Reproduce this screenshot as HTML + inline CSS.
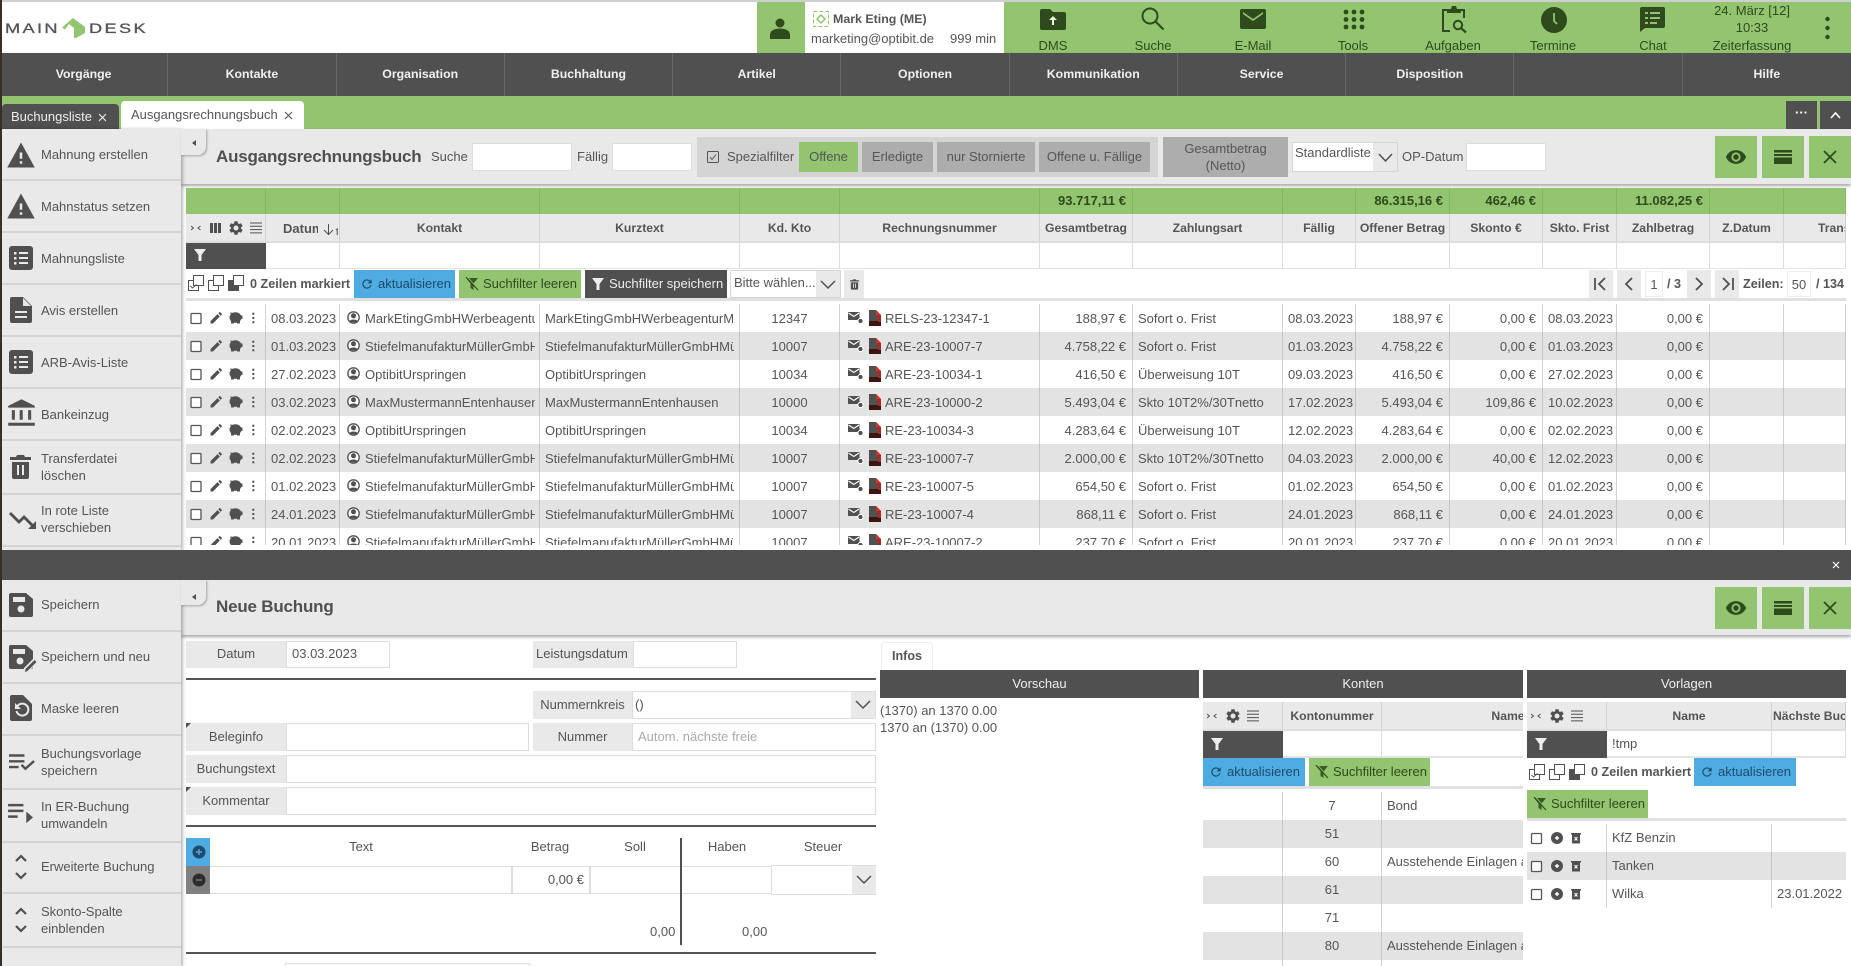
<!DOCTYPE html>
<html lang="de"><head><meta charset="utf-8"><title>Main Desk</title>
<style>
*{box-sizing:border-box}
html,body{margin:0;padding:0;width:1851px;height:966px;overflow:hidden;background:#fff}
body{font:13px/17px "Liberation Sans",sans-serif;color:#555;position:relative}
.a{position:absolute}
.t{position:absolute;white-space:nowrap;line-height:17px}
.c{text-align:center}
.b{font-weight:bold;font-size:12.600px}
.g{background:#93c46f}
.d{background:#505050}
.l{background:#e9e9e9}
.sep{position:absolute;left:2px;width:179px;height:2px;background:#d3d3d3}
.nav{position:absolute;top:53px;height:43px;width:168.27px;line-height:43px;text-align:center;color:#f0f0f0;font-weight:bold;font-size:12.300px;border-right:1px solid #666}
.top{position:absolute;top:37px;width:100px;text-align:center;color:#2f4a1d;line-height:17px}
.inp{position:absolute;background:#fff;border:1px solid #ddd;line-height:26px;padding-left:5px;overflow:hidden;white-space:nowrap}
.lab{position:absolute;background:#e9e9e9;text-align:center;line-height:28px;white-space:nowrap;overflow:hidden}
.btn{position:absolute;background:#adadad;text-align:center;line-height:30px;white-space:nowrap}
.btn.g{background:#93c46f}
.tb{position:absolute;height:28px;line-height:28px;white-space:nowrap;overflow:hidden;padding-left:24px}
.ic{position:absolute;overflow:visible}
.hr{position:absolute;left:186px;width:690px;height:2px;background:#555}
.clip{position:absolute;overflow:hidden}
.logo{position:absolute;top:18px;line-height:20px;font-size:14px;letter-spacing:1.800px;color:#555;-webkit-text-stroke:.3px #555;transform:scaleX(1.3);transform-origin:0 0;white-space:nowrap}
table{border-collapse:separate;border-spacing:0;table-layout:fixed;position:absolute;left:0;top:0}
td{height:28px;padding:0 5px;white-space:nowrap;overflow:hidden;border-right:1px solid #d2d2d2;line-height:28px}
.z td{background:#e3e3e3;border-right-color:#c4c4c4}
td.r{text-align:right;padding-right:6px}
td.m{text-align:center}
td.n{padding:0}
td svg{display:block}
td.uc{position:relative;padding-left:25px;padding-right:4px}
td.rn{position:relative;padding-left:45px;padding-right:0}
td.uc svg,td.rn svg{position:absolute;left:0;top:0}
.o{overflow:hidden}
.mt td{padding-top:2px;line-height:26px}
.mt td.n{padding-top:0}
.s td{height:26px;background:#93c46f;color:#2f4a1d;font-weight:bold;border-right:1px solid #86b562;line-height:26px}
.h td{height:29px;background:#e9e9e9;font-weight:bold;font-size:12.200px;text-align:center;border-right:1px solid #d2d2d2;border-bottom:2px solid #dedede;padding:2px 2px 0;line-height:25px}
.f td{height:27px;background:#fff;border-right:1px solid #ddd;border-bottom:2px solid #e3e3e3;line-height:25px}
.f td.k{background:#505050;border:0}
</style></head>
<body>
<svg width="0" height="0" style="position:absolute">
<defs>
<symbol id="warn" viewBox="0 0 24 24"><path d="M1 22h22L12 2 1 22zm12-3h-2v-2h2v2zm0-4h-2v-5h2v5z" fill="#505050" fill-rule="evenodd"/></symbol>
<symbol id="list" viewBox="0 0 24 24"><rect x="0" y="0" width="24" height="24" rx="3" fill="#505050"/><path d="M5 6h2.500v2.500H5zM5 11h2.500v2.500H5zM5 16h2.500v2.500H5zM10 6h9v2h-9zM10 11h9v2h-9zM10 16h9v2h-9z" fill="#e9e9e9"/></symbol>
<symbol id="doc" viewBox="0 0 22 26"><path d="M2 0h11l9 9v15a2 2 0 0 1-2 2H2a2 2 0 0 1-2-2V2a2 2 0 0 1 2-2z" fill="#505050"/><path d="M13 1v8h8zM5 14h12v2H5zM5 19h12v2H5z" fill="#e9e9e9"/></symbol>
<symbol id="bank" viewBox="0 0 24 24"><path d="M4 10v8h2.500v-8H4zm6.500 0v8H13v-8h-2.500zM1 23h22v-2.500H1V23zM17.500 10v8H20v-8h-2.500zM12 1L1 6.500V8h22V6.500L12 1z" fill="#505050"/></symbol>
<symbol id="trash" viewBox="0 0 21 24"><path d="M2 7h17v15a2 2 0 0 1-2 2H4a2 2 0 0 1-2-2zM0 2h6l1-2h7l1 2h6v3H0z" fill="#505050"/><path d="M7 10h2v10H7zM12 10h2v10h-2z" fill="#e9e9e9"/></symbol>
<symbol id="trend" viewBox="0 0 28 18"><path d="M20 18l3-3-7-7-5 5-10-10L3 1l8 8 5-5 9 9 3-3v8z" fill="#505050"/></symbol>
<symbol id="save" viewBox="0 0 24 24"><path d="M2 0h15l7 6v16a2 2 0 0 1-2 2H2a2 2 0 0 1-2-2V2a2 2 0 0 1 2-2z" fill="#505050"/><path d="M4 4h12v5H4z" fill="#e9e9e9"/><circle cx="12" cy="16" r="3.500" fill="#e9e9e9"/></symbol>
<symbol id="savep" viewBox="0 0 28 28"><path d="M2 0h15l7 6v16a2 2 0 0 1-2 2H2a2 2 0 0 1-2-2V2a2 2 0 0 1 2-2z" fill="#505050"/><path d="M4 4h12v5H4z" fill="#e9e9e9"/><circle cx="11" cy="16" r="3.500" fill="#e9e9e9"/><path d="M14 28l1-5 10-10 4 4-10 10z" fill="#e9e9e9"/><path d="M16 27l.5-3 9-9 2 2-9 9z" fill="#505050"/></symbol>
<symbol id="undo" viewBox="0 0 22 26"><path d="M2 0h11l9 9v15a2 2 0 0 1-2 2H2a2 2 0 0 1-2-2V2a2 2 0 0 1 2-2z" fill="#505050"/><path d="M7.500 11a6 6 0 1 1-1 5" fill="none" stroke="#e9e9e9" stroke-width="2"/><path d="M5 8v6h6z" fill="#e9e9e9"/></symbol>
<symbol id="lcheck" viewBox="0 0 28 18"><path d="M0 1h16v2.500H0zM0 7h16v2.500H0zM0 13h10v2.500H0z" fill="#505050"/><path d="M13 12l4 4 9-8" fill="none" stroke="#505050" stroke-width="2.500"/></symbol>
<symbol id="larrow" viewBox="0 0 28 24"><path d="M0 2h16v2.500H0zM0 8h16v2.500H0zM0 14h10v2.500H0zM19 10v12l7-6z" fill="#505050"/></symbol>
<symbol id="ud" viewBox="0 0 14 30"><path d="M2 9l5-5 5 5M2 21l5 5 5-5" fill="none" stroke="#505050" stroke-width="2.200"/></symbol>
<symbol id="search" viewBox="0 0 24 24"><circle cx="9" cy="9" r="7.500" fill="none" stroke="#2f4a1d" stroke-width="2"/><path d="M14 14l8.500 8.500" stroke="#2f4a1d" stroke-width="2.200" fill="none"/></symbol>
<symbol id="eye" viewBox="0 0 24 24"><path d="M12 4.500C7 4.500 2.730 7.610 1 12c1.730 4.390 6 7.500 11 7.500s9.270-3.110 11-7.500c-1.730-4.390-6-7.500-11-7.500zM12 17a5 5 0 1 1 0-10 5 5 0 0 1 0 10zm0-8a3 3 0 1 0 0 6 3 3 0 0 0 0-6z" fill="#2f4a1d"/></symbol>
<symbol id="bars" viewBox="0 0 18 14"><path d="M0 0h18v2.500H0zM0 4h18v2H0zM0 7.500h18V14H0z" fill="#2f4a1d"/></symbol>
<symbol id="xx" viewBox="0 0 14 14"><path d="M1 1l12 12M13 1L1 13" stroke="#2f4a1d" stroke-width="1.800" fill="none"/></symbol>
<symbol id="filter" viewBox="0 0 12 12"><path d="M0 0h12L7.500 6v6h-3V6z" fill="#eee"/></symbol>
<symbol id="filterx" viewBox="0 0 14 14"><path d="M1 1h12L8.500 6.500V13l-3-2V6.500z" fill="#3c5a25"/><path d="M2 0l11 12.500" stroke="#93c46f" stroke-width="1.600"/><path d="M1 0l12 13" stroke="#2f4a1d" stroke-width="1.100"/></symbol>
<symbol id="ref" viewBox="0 0 24 24"><path d="M17.650 6.350A7.958 7.958 0 0 0 12 4c-4.420 0-7.990 3.580-7.990 8s3.570 8 7.990 8c3.730 0 6.840-2.550 7.730-6h-2.080A5.990 5.990 0 0 1 12 18c-3.310 0-6-2.690-6-6s2.690-6 6-6c1.660 0 3.140.69 4.220 1.780L13 11h7V4l-2.350 2.350z" fill="#1f4a6b"/></symbol>
<symbol id="gear" viewBox="0 0 24 24"><path d="M19.140 12.940c.04-.3.06-.61.06-.94s-.02-.64-.07-.94l2.030-1.580a.49.49 0 0 0 .12-.61l-1.920-3.320a.49.49 0 0 0-.59-.22l-2.390.96a7 7 0 0 0-1.620-.94l-.36-2.540a.48.48 0 0 0-.48-.41h-3.840a.48.48 0 0 0-.47.41l-.36 2.540c-.59.24-1.130.57-1.620.94l-2.390-.96a.49.49 0 0 0-.59.22L2.740 8.870a.48.48 0 0 0 .12.61l2.030 1.580c-.05.3-.09.63-.09.94s.02.64.07.94l-2.030 1.580a.49.49 0 0 0-.12.61l1.920 3.320c.12.22.37.29.59.22l2.390-.96c.5.38 1.030.7 1.620.94l.36 2.540c.05.24.24.41.48.41h3.840c.24 0 .44-.17.47-.41l.36-2.540c.59-.24 1.130-.56 1.620-.94l2.390.96c.22.08.47 0 .59-.22l1.920-3.320c.12-.22.07-.47-.12-.61l-2.010-1.580zM12 15.600A3.600 3.600 0 1 1 12 8.400a3.600 3.600 0 0 1 0 7.200z" fill="#505050" transform="translate(-2.400 -2.400) scale(1.200)"/></symbol>
<symbol id="lin" viewBox="0 0 12 12"><path d="M0 .5h12v1H0zM0 3.800h12v1H0zM0 7.100h12v1H0zM0 10.400h12v1H0z" fill="#505050"/></symbol>
<symbol id="arr" viewBox="0 0 10 6"><path d="M0 1l2.500 2L0 5M9.500 1L7 3l2.500 2" fill="none" stroke="#505050" stroke-width="1"/></symbol>
<symbol id="mk" viewBox="0 0 56 16"><rect x=".5" y="5.500" width="10" height="10" fill="#fff" stroke="#505050"/><rect x="5.500" y=".5" width="10" height="10" fill="#fff" stroke="#505050"/><path d="M2.500 11l2 2 4-3.500" stroke="#505050" fill="none"/><rect x="20.500" y="5.500" width="10" height="10" fill="#fff" stroke="#505050"/><rect x="25.500" y=".5" width="10" height="10" fill="#fff" stroke="#505050"/><rect x="40" y="5" width="11" height="11" fill="#505050"/><rect x="45.500" y=".5" width="10" height="10" fill="#fff" stroke="#505050"/></symbol>
<g id="ri">
<rect x="5" y="9.500" width="10" height="10" rx="1" fill="#fff" stroke="#555" stroke-width="1.300"/>
<path d="M24.500 19.500v-2.400l7-7 2.400 2.400-7 7zM32.300 9.300l1-1a.7.7 0 0 1 1 0l1.400 1.400a.7.7 0 0 1 0 1l-1 1z" fill="#505050"/>
<ellipse cx="49.500" cy="13.500" rx="6" ry="5.300" fill="#505050"/><rect x="45" y="16" width="3" height="3.500" fill="#505050"/><rect x="51" y="16" width="3" height="3.500" fill="#505050"/><path d="M44 8.500l4 .5-2 3zM54 11.500h2.500v3.500H54z" fill="#505050"/>
<path d="M66.300 8.800h2v2h-2zM66.300 13h2v2h-2zM66.300 17.200h2v2h-2z" fill="#505050"/>
</g>
<g id="uc"><circle cx="13.500" cy="13.500" r="5.700" fill="#fff" stroke="#505050" stroke-width="1.300"/><circle cx="13.500" cy="11.800" r="2.500" fill="#505050"/><path d="M9.500 17c1-2 7-2 8 0-1.500 1.700-6.500 1.700-8 0z" fill="#505050"/></g>
<g id="rn"><path d="M8 8h11.500v8H8z" fill="#505050"/><path d="M8.500 9l5.300 3.500L19 9" stroke="#fff" fill="none" stroke-width="1.100"/><circle cx="20.500" cy="17" r="2.600" fill="#505050" stroke="#fff"/><path d="M29 6h7l5 5v6H29z" fill="#505050"/><path d="M36 6l5 5h-5z" fill="#d93025"/><path d="M29 17h12v5H29z" fill="#3a1512"/><path d="M38 11h3v7h-3z" fill="#b3261e"/></g>
<g id="vi"><rect x="4.500" y="9.500" width="10" height="10" rx="1" fill="#fff" stroke="#555" stroke-width="1.300"/><circle cx="30" cy="14" r="6" fill="#505050"/><path d="M28 14h4M30 12v4" stroke="#fff" stroke-width="1.400"/><path d="M45 10.500h8v9h-8zM44 9h10v1.500H44z" fill="#505050"/><path d="M47.500 13l3 3.500M50.500 13l-3 3.500" stroke="#fff" stroke-width="1"/></g>
</defs>
</svg>

<div class="a" style="left:0;top:0;width:2px;height:966px;background:#3a2d2a;z-index:9"></div>
<div class="a" style="left:0;top:0;width:1851px;height:2px;background:#cfcfcf"></div>

<!-- HEADER -->
<div class="logo" style="left:5px">MAIN</div>
<svg class="ic" style="left:62px;top:18px" width="23" height="20" viewBox="0 0 23 20"><path d="M0 9.500L11 0l12 9v6l-9 5h-2V10L7 6 3 11.500z" fill="#93c46f"/></svg>
<div class="logo" style="left:89px">DESK</div>

<div class="a g" style="left:757px;top:2px;width:48px;height:51px"></div>
<svg class="ic" style="left:770px;top:18px" width="20" height="21" viewBox="0 0 20 21"><circle cx="10" cy="5" r="4.500" fill="#2f4a1d"/><path d="M0 21v-4c0-4 4-6.500 10-6.500S20 13 20 17v4z" fill="#2f4a1d"/></svg>
<svg class="ic" style="left:813px;top:11px" width="16" height="16" viewBox="0 0 16 16"><rect x=".5" y=".5" width="15" height="15" fill="none" stroke="#93c46f" stroke-dasharray="4 2"/><path d="M8 4l4 4-4 4-4-4z" fill="none" stroke="#93c46f" stroke-width="1.500"/></svg>
<div class="t b" style="left:833px;top:11px;font-size:12.400px">Mark Eting (ME)</div>
<div class="t" style="left:811px;top:30px">marketing@optibit.de</div>
<div class="t" style="left:950px;top:30px">999 min</div>

<div class="a g" style="left:1004px;top:2px;width:847px;height:51px"></div>
<svg class="ic" style="left:1040px;top:9px" width="26" height="21" viewBox="0 0 26 21"><path d="M2 0h8l3 3h11a2 2 0 0 1 2 2v14a2 2 0 0 1-2 2H2a2 2 0 0 1-2-2V2a2 2 0 0 1 2-2z" fill="#2f4a1d"/><path d="M12 16v-5H9l4-4 4 4h-3v5z" fill="#e9f2e0"/></svg>
<svg class="ic" style="left:1141px;top:7px" width="24" height="24"><use href="#search"/></svg>
<svg class="ic" style="left:1240px;top:9px" width="26" height="20" viewBox="0 0 26 20"><path d="M2 0h22a2 2 0 0 1 2 2v16a2 2 0 0 1-2 2H2a2 2 0 0 1-2-2V2a2 2 0 0 1 2-2zm1 3l10 7 10-7v2l-10 7L3 5z" fill="#2f4a1d" fill-rule="evenodd"/></svg>
<svg class="ic" style="left:1343px;top:9px" width="22" height="21" viewBox="0 0 22 21"><g fill="#2f4a1d"><circle cx="3" cy="3" r="2.400"/><circle cx="11" cy="3" r="2.400"/><circle cx="19" cy="3" r="2.400"/><circle cx="3" cy="10.500" r="2.400"/><circle cx="11" cy="10.500" r="2.400"/><circle cx="19" cy="10.500" r="2.400"/><circle cx="3" cy="18" r="2.400"/><circle cx="11" cy="18" r="2.400"/><circle cx="19" cy="18" r="2.400"/></g></svg>
<svg class="ic" style="left:1442px;top:5px" width="25" height="28" viewBox="0 0 25 28"><path d="M8 26H1V5h4M18 5h4v8" fill="none" stroke="#2f4a1d" stroke-width="2"/><path d="M5 4h4l1-3h4l1 3h4v4H5z" fill="#2f4a1d"/><circle cx="16" cy="20" r="4.200" fill="none" stroke="#2f4a1d" stroke-width="2"/><path d="M19 23l5 4.500" stroke="#2f4a1d" stroke-width="2.200"/></svg>
<svg class="ic" style="left:1541px;top:7px" width="26" height="26" viewBox="0 0 26 26"><circle cx="13" cy="13" r="13" fill="#2f4a1d"/><path d="M13 6v8l3 3" stroke="#93c46f" stroke-width="1.800" fill="none"/></svg>
<svg class="ic" style="left:1640px;top:7px" width="25" height="25" viewBox="0 0 25 25"><path d="M2 0h21a2 2 0 0 1 2 2v17a2 2 0 0 1-2 2H5l-5 4V2a2 2 0 0 1 2-2z" fill="#2f4a1d"/><path d="M5 5h3v2H5zM10 5h10v2H10zM5 10h3v2H5zM10 10h10v2H10zM5 15h3v2H5zM10 15h7v2H10z" fill="#93c46f"/></svg>
<div class="top" style="left:1003px">DMS</div>
<div class="top" style="left:1103px">Suche</div>
<div class="top" style="left:1203px">E-Mail</div>
<div class="top" style="left:1303px">Tools</div>
<div class="top" style="left:1403px">Aufgaben</div>
<div class="top" style="left:1503px">Termine</div>
<div class="top" style="left:1603px">Chat</div>
<div class="top" style="left:1702px;top:2px">24. März [12]</div>
<div class="top" style="left:1702px;top:19px">10:33</div>
<div class="top" style="left:1702px">Zeiterfassung</div>
<svg class="ic" style="left:1825px;top:16px" width="5" height="23"><g fill="#2f4a1d"><circle cx="2.500" cy="3" r="2.200"/><circle cx="2.500" cy="12" r="2.200"/><circle cx="2.500" cy="21" r="2.200"/></g></svg>

<!-- NAV -->
<div class="a d" style="left:0;top:53px;width:1851px;height:43px;box-shadow:0 1px 2px rgba(0,0,0,.3)"></div>
<div class="nav" style="left:0">Vorgänge</div>
<div class="nav" style="left:168.270px">Kontakte</div>
<div class="nav" style="left:336.550px">Organisation</div>
<div class="nav" style="left:504.820px">Buchhaltung</div>
<div class="nav" style="left:673.090px">Artikel</div>
<div class="nav" style="left:841.360px">Optionen</div>
<div class="nav" style="left:1009.640px">Kommunikation</div>
<div class="nav" style="left:1177.910px">Service</div>
<div class="nav" style="left:1346.180px">Disposition</div>
<div class="nav" style="left:1514.450px"></div>
<div class="nav" style="left:1682.730px;border:0">Hilfe</div>

<!-- TAB BAR -->
<div class="a g" style="left:0;top:96px;width:1851px;height:33px"></div>
<div class="a d" style="left:2px;top:104px;width:117px;height:25px;border-radius:4px 4px 0 0;color:#eee;line-height:26px;padding-left:9px;white-space:nowrap">Buchungsliste</div>
<svg class="ic" style="left:98px;top:113px" width="9" height="9"><path d="M1 1l7 7M8 1L1 8" stroke="#eee" stroke-width="1.100"/></svg>
<div class="a" style="left:121px;top:101px;width:183px;height:28px;background:#fff;border-radius:4px 4px 0 0;line-height:28px;padding-left:10px;white-space:nowrap">Ausgangsrechnungsbuch</div>
<svg class="ic" style="left:284px;top:111px" width="9" height="9"><path d="M1 1l7 7M8 1L1 8" stroke="#555" stroke-width="1.100"/></svg>
<div class="a d c" style="left:1786px;top:101px;width:31px;height:28px;color:#fff;line-height:24px;font-weight:bold">···</div>
<div class="a d" style="left:1820px;top:101px;width:31px;height:28px"></div>
<svg class="ic" style="left:1830px;top:111px" width="11" height="8"><path d="M1 7l4.500-5L10 7" stroke="#fff" stroke-width="1.600" fill="none"/></svg>

<!-- TOOLBAR 1 -->
<div class="a l" style="left:181px;top:129px;width:1670px;height:55px;box-shadow:0 2px 3px rgba(0,0,0,.35)"></div>
<div class="t" style="left:216px;top:146px;font-size:17px;font-weight:bold;line-height:22px;color:#505050;letter-spacing:-.2px">Ausgangsrechnungsbuch</div>
<div class="t" style="left:431px;top:148px">Suche</div>
<div class="inp" style="left:472px;top:143px;width:100px;height:28px"></div>
<div class="t" style="left:577px;top:148px">Fällig</div>
<div class="inp" style="left:612px;top:143px;width:80px;height:28px"></div>
<div class="a" style="left:697px;top:137px;width:461px;height:40px;background:#d4d4d4"></div>
<svg class="ic" style="left:707px;top:151px" width="12" height="12"><rect x=".5" y=".5" width="11" height="11" rx="1" fill="none" stroke="#555"/><path d="M3 6l2 2.500 4-5" fill="none" stroke="#555"/></svg>
<div class="t" style="left:727px;top:148px">Spezialfilter</div>
<div class="btn g" style="left:799px;top:142px;width:59px;height:30px">Offene</div>
<div class="btn" style="left:862px;top:142px;width:71px;height:30px">Erledigte</div>
<div class="btn" style="left:937px;top:142px;width:98px;height:30px">nur Stornierte</div>
<div class="btn" style="left:1039px;top:142px;width:111px;height:30px">Offene u. Fällige</div>
<div class="a c" style="left:1163px;top:137px;width:125px;height:40px;background:#adadad;padding-top:3px">Gesamtbetrag<br>(Netto)</div>
<div class="a" style="left:1292px;top:142px;width:106px;height:30px;background:#fff;border:1px solid #d5d5d5;line-height:20px;padding-left:2px;white-space:nowrap">Standardliste</div>
<div class="a" style="left:1373px;top:143px;width:24px;height:28px;background:#e9e9e9"></div>
<svg class="ic" style="left:1378px;top:153px" width="15" height="10"><path d="M1 1l6.500 7L14 1" fill="none" stroke="#505050" stroke-width="1.500"/></svg>
<div class="t" style="left:1402px;top:148px">OP-Datum</div>
<div class="inp" style="left:1466px;top:143px;width:80px;height:28px"></div>

<div class="a g" style="left:1715px;top:136px;width:42px;height:42px"></div>
<div class="a g" style="left:1762px;top:136px;width:42px;height:42px"></div>
<div class="a g" style="left:1809px;top:136px;width:42px;height:42px"></div>
<svg class="ic" style="left:1725px;top:146px" width="22" height="22"><use href="#eye"/></svg>
<svg class="ic" style="left:1774px;top:150px" width="18" height="14"><use href="#bars"/></svg>
<svg class="ic" style="left:1823px;top:150px" width="14" height="14"><use href="#xx"/></svg>

<!-- LEFT PANEL 1 -->
<div class="a l" style="left:2px;top:129px;width:179px;height:421px;box-shadow:1px 1px 4px rgba(0,0,0,.4);z-index:2"></div>
<div class="a l" style="left:181px;top:129px;width:25px;height:26px;border-radius:0 0 8px 0;box-shadow:1px 1px 2px rgba(0,0,0,.3);z-index:2"></div>
<svg class="ic" style="left:192px;top:140px;z-index:3" width="4" height="6"><path d="M4 0v6L0 3z" fill="#505050"/></svg>
<div style="position:absolute;left:0;top:0;z-index:3">
<div class="sep" style="top:179px"></div><div class="sep" style="top:231px"></div><div class="sep" style="top:283px"></div><div class="sep" style="top:335px"></div><div class="sep" style="top:387px"></div><div class="sep" style="top:439px"></div><div class="sep" style="top:493px"></div><div class="sep" style="top:545px"></div>
<svg class="ic" style="left:6px;top:140px" width="30" height="30"><use href="#warn"/></svg>
<svg class="ic" style="left:6px;top:191px" width="30" height="30"><use href="#warn"/></svg>
<svg class="ic" style="left:9px;top:246px" width="24" height="24"><use href="#list"/></svg>
<svg class="ic" style="left:10px;top:297px" width="22" height="26"><use href="#doc"/></svg>
<svg class="ic" style="left:9px;top:350px" width="24" height="24"><use href="#list"/></svg>
<svg class="ic" style="left:7px;top:398px" width="29" height="29"><use href="#bank"/></svg>
<svg class="ic" style="left:10px;top:455px" width="21" height="24"><use href="#trash"/></svg>
<svg class="ic" style="left:8px;top:511px" width="28" height="18"><use href="#trend"/></svg>
<div class="t" style="left:41px;top:146px">Mahnung erstellen</div>
<div class="t" style="left:41px;top:198px">Mahnstatus setzen</div>
<div class="t" style="left:41px;top:250px">Mahnungsliste</div>
<div class="t" style="left:41px;top:302px">Avis erstellen</div>
<div class="t" style="left:41px;top:354px">ARB-Avis-Liste</div>
<div class="t" style="left:41px;top:406px">Bankeinzug</div>
<div class="t" style="left:41px;top:450px">Transferdatei</div>
<div class="t" style="left:41px;top:467px">löschen</div>
<div class="t" style="left:41px;top:502px">In rote Liste</div>
<div class="t" style="left:41px;top:519px">verschieben</div>
</div>

<!-- MAIN GRID HEAD -->
<div class="clip" style="left:186px;top:188px;width:1660px;height:81px">
<table style="width:1660px">
<colgroup><col style="width:80px"><col style="width:74px"><col style="width:200px"><col style="width:200px"><col style="width:100px"><col style="width:200px"><col style="width:93px"><col style="width:150px"><col style="width:73px"><col style="width:94px"><col style="width:93px"><col style="width:74px"><col style="width:93px"><col style="width:74px"><col style="width:62px"></colgroup>
<tr class="s"><td></td><td></td><td></td><td></td><td></td><td></td><td class="r">93.717,11 €</td><td></td><td></td><td class="r">86.315,16 €</td><td class="r">462,46 €</td><td></td><td class="r">11.082,25 €</td><td></td><td></td></tr>
<tr class="h"><td></td><td style="text-align:left;padding-left:17px"><span style="display:inline-block;width:35px;overflow:hidden;vertical-align:top;font-size:13px">Datum</span></td><td>Kontakt</td><td>Kurztext</td><td>Kd. Kto</td><td>Rechnungsnummer</td><td>Gesamtbetrag</td><td>Zahlungsart</td><td>Fällig</td><td>Offener Betrag</td><td>Skonto €</td><td>Skto. Frist</td><td>Zahlbetrag</td><td>Z.Datum</td><td style="text-align:left;padding-left:34px">Transaktion</td></tr>
<tr class="f"><td class="k"></td><td></td><td></td><td></td><td></td><td></td><td></td><td></td><td></td><td></td><td></td><td></td><td></td><td></td><td></td></tr>
</table>
</div>
<svg class="ic" style="left:323px;top:223px" width="16" height="13" viewBox="0 0 16 13"><path d="M5.500 1v10M1 7l4.500 4.500L10 7" fill="none" stroke="#505050" stroke-width="1"/><path d="M13 7l1.200-1v6" fill="none" stroke="#505050" stroke-width="1"/></svg>
<svg class="ic" style="left:191px;top:225px" width="10" height="6"><use href="#arr"/></svg>
<svg class="ic" style="left:210px;top:223px" width="11" height="10"><path d="M0 0h3v10H0zM4 0h3v10H4zM8 0h3v10H8z" fill="#505050"/></svg>
<svg class="ic" style="left:229px;top:221px" width="14" height="14"><use href="#gear"/></svg>
<svg class="ic" style="left:250px;top:222px" width="12" height="12"><use href="#lin"/></svg>
<svg class="ic" style="left:194px;top:249px" width="12" height="12"><use href="#filter"/></svg>

<!-- MAIN GRID TOOLBAR -->
<svg class="ic" style="left:188px;top:275px" width="56" height="16"><use href="#mk"/></svg>
<div class="t b" style="left:250px;top:276px">0 Zeilen markiert</div>
<div class="tb" style="left:354px;top:270px;width:101px;background:#4eace3;color:#1f4a6b;padding-left:24px">aktualisieren</div>
<svg class="ic" style="left:360px;top:277px" width="14" height="14"><use href="#ref"/></svg>
<div class="tb g" style="left:459px;top:270px;width:122px;color:#2f4a1d;padding-left:24px">Suchfilter leeren</div>
<svg class="ic" style="left:465px;top:277px" width="14" height="14"><use href="#filterx"/></svg>
<div class="tb d" style="left:585px;top:270px;width:142px;color:#eee;padding-left:24px">Suchfilter speichern</div>
<svg class="ic" style="left:592px;top:278px" width="12" height="12"><use href="#filter"/></svg>
<div class="a" style="left:730px;top:270px;width:111px;height:28px;background:#fff;border:1px solid #d5d5d5;line-height:24px;padding-left:3px;white-space:nowrap;overflow:hidden">Bitte wählen...</div>
<div class="a" style="left:816px;top:271px;width:24px;height:26px;background:#e9e9e9"></div>
<svg class="ic" style="left:820px;top:280px" width="16" height="10"><path d="M1 1l7 7 7-7" fill="none" stroke="#505050" stroke-width="1.500"/></svg>
<div class="a l" style="left:844px;top:270px;width:20px;height:28px"></div>
<svg class="ic" style="left:850px;top:279px" width="9" height="11"><use href="#trash"/></svg>

<div class="a l" style="left:1589px;top:270px;width:24px;height:28px"></div>
<svg class="ic" style="left:1594px;top:277px" width="14" height="14" viewBox="0 0 14 14"><path d="M1 1v12M11 1L5 7l6 6" fill="none" stroke="#505050" stroke-width="1.800"/></svg>
<div class="a l" style="left:1617px;top:270px;width:24px;height:28px"></div>
<svg class="ic" style="left:1624px;top:277px" width="10" height="14" viewBox="0 0 10 14"><path d="M8 1L2 7l6 6" fill="none" stroke="#505050" stroke-width="1.800"/></svg>
<div class="inp c" style="left:1645px;top:271px;width:18px;height:26px;padding:0;border-color:#eee">1</div>
<div class="t b" style="left:1667px;top:276px">/ 3</div>
<div class="a l" style="left:1687px;top:270px;width:24px;height:28px"></div>
<svg class="ic" style="left:1694px;top:277px" width="10" height="14" viewBox="0 0 10 14"><path d="M2 1l6 6-6 6" fill="none" stroke="#505050" stroke-width="1.800"/></svg>
<div class="a l" style="left:1715px;top:270px;width:24px;height:28px"></div>
<svg class="ic" style="left:1720px;top:277px" width="14" height="14" viewBox="0 0 14 14"><path d="M3 1l6 6-6 6M13 1v12" fill="none" stroke="#505050" stroke-width="1.800"/></svg>
<div class="t b" style="left:1743px;top:276px">Zeilen:</div>
<div class="inp c" style="left:1787px;top:271px;width:24px;height:26px;padding:0;border-color:#eee">50</div>
<div class="t b" style="left:1816px;top:276px">/ 134</div>
<div class="a" style="left:186px;top:298px;width:1660px;height:3px;background:#e0e0e0"></div>

<!-- MAIN ROWS -->
<div class="clip mt" style="left:186px;top:304px;width:1660px;height:241px">
<table style="width:1660px">
<colgroup><col style="width:80px"><col style="width:74px"><col style="width:200px"><col style="width:200px"><col style="width:100px"><col style="width:200px"><col style="width:93px"><col style="width:150px"><col style="width:73px"><col style="width:94px"><col style="width:93px"><col style="width:74px"><col style="width:93px"><col style="width:74px"><col style="width:62px"></colgroup>
<tr><td class="n"><svg width="79" height="28"><use href="#ri"/></svg></td><td>08.03.2023</td><td class="uc"><svg width="28" height="28"><use href="#uc"/></svg><div class="o">MarkEtingGmbHWerbeagentur</div></td><td><div class="o">MarkEtingGmbHWerbeagenturMünchen</div></td><td class="m">12347</td><td class="rn"><svg width="45" height="28"><use href="#rn"/></svg>RELS-23-12347-1</td><td class="r">188,97 €</td><td>Sofort o. Frist</td><td>08.03.2023</td><td class="r">188,97 €</td><td class="r">0,00 €</td><td>08.03.2023</td><td class="r">0,00 €</td><td></td><td></td></tr>
<tr class="z"><td class="n"><svg width="79" height="28"><use href="#ri"/></svg></td><td>01.03.2023</td><td class="uc"><svg width="28" height="28"><use href="#uc"/></svg><div class="o">StiefelmanufakturMüllerGmbH</div></td><td><div class="o">StiefelmanufakturMüllerGmbHMünchen</div></td><td class="m">10007</td><td class="rn"><svg width="45" height="28"><use href="#rn"/></svg>ARE-23-10007-7</td><td class="r">4.758,22 €</td><td>Sofort o. Frist</td><td>01.03.2023</td><td class="r">4.758,22 €</td><td class="r">0,00 €</td><td>01.03.2023</td><td class="r">0,00 €</td><td></td><td></td></tr>
<tr><td class="n"><svg width="79" height="28"><use href="#ri"/></svg></td><td>27.02.2023</td><td class="uc"><svg width="28" height="28"><use href="#uc"/></svg><div class="o">OptibitUrspringen</div></td><td><div class="o">OptibitUrspringen</div></td><td class="m">10034</td><td class="rn"><svg width="45" height="28"><use href="#rn"/></svg>ARE-23-10034-1</td><td class="r">416,50 €</td><td>Überweisung 10T</td><td>09.03.2023</td><td class="r">416,50 €</td><td class="r">0,00 €</td><td>27.02.2023</td><td class="r">0,00 €</td><td></td><td></td></tr>
<tr class="z"><td class="n"><svg width="79" height="28"><use href="#ri"/></svg></td><td>03.02.2023</td><td class="uc"><svg width="28" height="28"><use href="#uc"/></svg><div class="o">MaxMustermannEntenhausen</div></td><td><div class="o">MaxMustermannEntenhausen</div></td><td class="m">10000</td><td class="rn"><svg width="45" height="28"><use href="#rn"/></svg>ARE-23-10000-2</td><td class="r">5.493,04 €</td><td>Skto 10T2%/30Tnetto</td><td>17.02.2023</td><td class="r">5.493,04 €</td><td class="r">109,86 €</td><td>10.02.2023</td><td class="r">0,00 €</td><td></td><td></td></tr>
<tr><td class="n"><svg width="79" height="28"><use href="#ri"/></svg></td><td>02.02.2023</td><td class="uc"><svg width="28" height="28"><use href="#uc"/></svg><div class="o">OptibitUrspringen</div></td><td><div class="o">OptibitUrspringen</div></td><td class="m">10034</td><td class="rn"><svg width="45" height="28"><use href="#rn"/></svg>RE-23-10034-3</td><td class="r">4.283,64 €</td><td>Überweisung 10T</td><td>12.02.2023</td><td class="r">4.283,64 €</td><td class="r">0,00 €</td><td>02.02.2023</td><td class="r">0,00 €</td><td></td><td></td></tr>
<tr class="z"><td class="n"><svg width="79" height="28"><use href="#ri"/></svg></td><td>02.02.2023</td><td class="uc"><svg width="28" height="28"><use href="#uc"/></svg><div class="o">StiefelmanufakturMüllerGmbH</div></td><td><div class="o">StiefelmanufakturMüllerGmbHMünchen</div></td><td class="m">10007</td><td class="rn"><svg width="45" height="28"><use href="#rn"/></svg>RE-23-10007-7</td><td class="r">2.000,00 €</td><td>Skto 10T2%/30Tnetto</td><td>04.03.2023</td><td class="r">2.000,00 €</td><td class="r">40,00 €</td><td>12.02.2023</td><td class="r">0,00 €</td><td></td><td></td></tr>
<tr><td class="n"><svg width="79" height="28"><use href="#ri"/></svg></td><td>01.02.2023</td><td class="uc"><svg width="28" height="28"><use href="#uc"/></svg><div class="o">StiefelmanufakturMüllerGmbH</div></td><td><div class="o">StiefelmanufakturMüllerGmbHMünchen</div></td><td class="m">10007</td><td class="rn"><svg width="45" height="28"><use href="#rn"/></svg>RE-23-10007-5</td><td class="r">654,50 €</td><td>Sofort o. Frist</td><td>01.02.2023</td><td class="r">654,50 €</td><td class="r">0,00 €</td><td>01.02.2023</td><td class="r">0,00 €</td><td></td><td></td></tr>
<tr class="z"><td class="n"><svg width="79" height="28"><use href="#ri"/></svg></td><td>24.01.2023</td><td class="uc"><svg width="28" height="28"><use href="#uc"/></svg><div class="o">StiefelmanufakturMüllerGmbH</div></td><td><div class="o">StiefelmanufakturMüllerGmbHMünchen</div></td><td class="m">10007</td><td class="rn"><svg width="45" height="28"><use href="#rn"/></svg>RE-23-10007-4</td><td class="r">868,11 €</td><td>Sofort o. Frist</td><td>24.01.2023</td><td class="r">868,11 €</td><td class="r">0,00 €</td><td>24.01.2023</td><td class="r">0,00 €</td><td></td><td></td></tr>
<tr><td class="n"><svg width="79" height="28"><use href="#ri"/></svg></td><td>20.01.2023</td><td class="uc"><svg width="28" height="28"><use href="#uc"/></svg><div class="o">StiefelmanufakturMüllerGmbH</div></td><td><div class="o">StiefelmanufakturMüllerGmbHMünchen</div></td><td class="m">10007</td><td class="rn"><svg width="45" height="28"><use href="#rn"/></svg>ARE-23-10007-2</td><td class="r">237,70 €</td><td>Sofort o. Frist</td><td>20.01.2023</td><td class="r">237,70 €</td><td class="r">0,00 €</td><td>20.01.2023</td><td class="r">0,00 €</td><td></td><td></td></tr>
</table>
</div>

<!-- DIVIDER BAR -->
<div class="a d" style="left:0;top:550px;width:1851px;height:30px;z-index:4"></div>
<svg class="ic" style="left:1832px;top:561px;z-index:5" width="8" height="8"><path d="M1 1l6 6M7 1L1 7" stroke="#fff" stroke-width="1.200"/></svg>

<!-- TOOLBAR 2 -->
<div class="a l" style="left:181px;top:580px;width:1670px;height:55px;box-shadow:0 2px 3px rgba(0,0,0,.35)"></div>
<div class="t" style="left:216px;top:596px;font-size:17px;font-weight:bold;line-height:22px;color:#505050;letter-spacing:-.2px">Neue Buchung</div>
<div class="a g" style="left:1715px;top:587px;width:42px;height:42px"></div>
<div class="a g" style="left:1762px;top:587px;width:42px;height:42px"></div>
<div class="a g" style="left:1809px;top:587px;width:42px;height:42px"></div>
<svg class="ic" style="left:1725px;top:597px" width="22" height="22"><use href="#eye"/></svg>
<svg class="ic" style="left:1774px;top:601px" width="18" height="14"><use href="#bars"/></svg>
<svg class="ic" style="left:1823px;top:601px" width="14" height="14"><use href="#xx"/></svg>

<!-- LEFT PANEL 2 -->
<div class="a l" style="left:2px;top:580px;width:179px;height:386px;box-shadow:1px 1px 4px rgba(0,0,0,.4);z-index:2"></div>
<div class="a l" style="left:181px;top:580px;width:25px;height:25px;border-radius:0 0 8px 0;box-shadow:1px 1px 2px rgba(0,0,0,.3);z-index:2"></div>
<svg class="ic" style="left:192px;top:594px;z-index:3" width="4" height="6"><path d="M4 0v6L0 3z" fill="#505050"/></svg>
<div style="position:absolute;left:0;top:0;z-index:3">
<div class="sep" style="top:630px"></div><div class="sep" style="top:682px"></div><div class="sep" style="top:734px"></div><div class="sep" style="top:788px"></div><div class="sep" style="top:841px"></div><div class="sep" style="top:892px"></div><div class="sep" style="top:946px"></div>
<svg class="ic" style="left:9px;top:593px" width="24" height="24"><use href="#save"/></svg>
<svg class="ic" style="left:9px;top:645px" width="28" height="28"><use href="#savep"/></svg>
<svg class="ic" style="left:10px;top:695px" width="22" height="26"><use href="#undo"/></svg>
<svg class="ic" style="left:9px;top:753px" width="27" height="18"><use href="#lcheck"/></svg>
<svg class="ic" style="left:8px;top:802px" width="27" height="23"><use href="#larrow"/></svg>
<svg class="ic" style="left:14px;top:852px" width="14" height="30"><use href="#ud"/></svg>
<svg class="ic" style="left:14px;top:905px" width="14" height="30"><use href="#ud"/></svg>
<div class="t" style="left:41px;top:596px">Speichern</div>
<div class="t" style="left:41px;top:648px">Speichern und neu</div>
<div class="t" style="left:41px;top:700px">Maske leeren</div>
<div class="t" style="left:41px;top:745px">Buchungsvorlage</div>
<div class="t" style="left:41px;top:762px">speichern</div>
<div class="t" style="left:41px;top:798px">In ER-Buchung</div>
<div class="t" style="left:41px;top:815px">umwandeln</div>
<div class="t" style="left:41px;top:858px">Erweiterte Buchung</div>
<div class="t" style="left:41px;top:903px">Skonto-Spalte</div>
<div class="t" style="left:41px;top:920px">einblenden</div>
</div>

<!-- FORM -->
<div class="lab" style="left:186px;top:641px;width:100px;height:27px;line-height:26px">Datum</div>
<div class="inp" style="left:286px;top:641px;width:104px;height:27px;line-height:24px">03.03.2023</div>
<div class="lab" style="left:533px;top:641px;width:100px;height:27px;line-height:26px;text-align:left;padding-left:3px">Leistungsdatum</div>
<div class="inp" style="left:633px;top:641px;width:104px;height:27px"></div>
<div class="hr" style="top:678px"></div>
<div class="lab" style="left:533px;top:691px;width:99px">Nummernkreis</div>
<div class="inp" style="left:632px;top:691px;width:244px;height:28px;padding-left:2px">()</div>
<div class="a" style="left:851px;top:692px;width:24px;height:26px;background:#e9e9e9"></div>
<svg class="ic" style="left:855px;top:700px" width="16" height="10"><path d="M1 1l7 7 7-7" fill="none" stroke="#505050" stroke-width="1.500"/></svg>
<div class="lab" style="left:186px;top:723px;width:100px">Beleginfo</div>
<svg class="ic" style="left:186px;top:723px" width="5" height="5"><path d="M0 0h5L0 5z" fill="#505050"/></svg>
<div class="inp" style="left:286px;top:723px;width:243px;height:28px"></div>
<div class="lab" style="left:533px;top:723px;width:99px">Nummer</div>
<div class="inp" style="left:632px;top:723px;width:244px;height:28px;color:#aaa">Autom. nächste freie</div>
<div class="lab" style="left:186px;top:755px;width:100px">Buchungstext</div>
<div class="inp" style="left:286px;top:755px;width:590px;height:28px"></div>
<div class="lab" style="left:186px;top:787px;width:100px">Kommentar</div>
<svg class="ic" style="left:186px;top:787px" width="5" height="5"><path d="M0 0h5L0 5z" fill="#505050"/></svg>
<div class="inp" style="left:286px;top:787px;width:590px;height:28px"></div>
<div class="hr" style="top:825px"></div>

<div class="a" style="left:186px;top:838px;width:24px;height:28px;background:#4eace3"></div>
<div class="a" style="left:186px;top:866px;width:24px;height:28px;background:#808080"></div>
<svg class="ic" style="left:192px;top:845px" width="14" height="14"><circle cx="7" cy="7" r="6.500" fill="#1f4a6b"/><path d="M4 7h6M7 4v6" stroke="#4eace3" stroke-width="1.400"/></svg>
<svg class="ic" style="left:192px;top:873px" width="14" height="14"><circle cx="7" cy="7" r="6.500" fill="#2c2c2c"/><path d="M4 7h6" stroke="#808080" stroke-width="1.400"/></svg>
<div class="t c" style="left:311px;top:838px;width:100px">Text</div>
<div class="t c" style="left:510px;top:838px;width:80px">Betrag</div>
<div class="t c" style="left:595px;top:838px;width:80px">Soll</div>
<div class="t c" style="left:687px;top:838px;width:80px">Haben</div>
<div class="t c" style="left:783px;top:838px;width:80px">Steuer</div>
<div class="inp" style="left:210px;top:866px;width:302px;height:28px;border-width:1px 1px 1px 0"></div>
<div class="inp" style="left:512px;top:866px;width:78px;height:28px;text-align:right;padding-right:5px">0,00 €</div>
<div class="inp" style="left:590px;top:866px;width:92px;height:28px"></div>
<div class="inp" style="left:681px;top:866px;width:91px;height:28px"></div>
<div class="inp" style="left:771px;top:865px;width:105px;height:30px"></div>
<div class="a" style="left:852px;top:866px;width:24px;height:28px;background:#e9e9e9"></div>
<svg class="ic" style="left:856px;top:875px" width="16" height="10"><path d="M1 1l7 7 7-7" fill="none" stroke="#505050" stroke-width="1.500"/></svg>
<div class="a" style="left:680px;top:838px;width:2px;height:107px;background:#505050"></div>
<div class="t" style="left:650px;top:923px">0,00</div>
<div class="t" style="left:742px;top:923px">0,00</div>
<div class="hr" style="top:952px"></div>
<div class="inp" style="left:285px;top:963px;width:245px;height:28px"></div>

<!-- INFOS -->
<div class="a" style="left:881px;top:642px;width:52px;height:28px;border:1px solid #eee;border-bottom:0;border-radius:4px 4px 0 0;line-height:26px;text-align:center;font-weight:bold;font-size:12.600px">Infos</div>
<div class="a d c" style="left:880px;top:670px;width:319px;height:28px;line-height:28px;color:#eee">Vorschau</div>
<div class="t" style="left:880px;top:702px">(1370) an 1370 0.00</div>
<div class="t" style="left:880px;top:719px">1370 an (1370) 0.00</div>

<!-- KONTEN -->
<div class="a d c" style="left:1203px;top:670px;width:320px;height:28px;line-height:28px;color:#eee">Konten</div>
<div class="clip" style="left:1203px;top:702px;width:320px;height:56px">
<table style="width:432px">
<colgroup><col style="width:80px"><col style="width:99px"><col style="width:253px"></colgroup>
<tr class="h"><td></td><td>Kontonummer</td><td>Name</td></tr>
<tr class="f"><td class="k"></td><td></td><td></td></tr>
</table>
</div>
<svg class="ic" style="left:1207px;top:713px" width="10" height="6"><use href="#arr"/></svg>
<svg class="ic" style="left:1226px;top:709px" width="14" height="14"><use href="#gear"/></svg>
<svg class="ic" style="left:1247px;top:710px" width="12" height="12"><use href="#lin"/></svg>
<svg class="ic" style="left:1211px;top:738px" width="12" height="12"><use href="#filter"/></svg>
<div class="tb" style="left:1203px;top:758px;width:102px;background:#4eace3;color:#1f4a6b">aktualisieren</div>
<svg class="ic" style="left:1209px;top:765px" width="14" height="14"><use href="#ref"/></svg>
<div class="tb g" style="left:1309px;top:758px;width:121px;color:#2f4a1d">Suchfilter leeren</div>
<svg class="ic" style="left:1315px;top:765px" width="14" height="14"><use href="#filterx"/></svg>
<div class="a" style="left:1203px;top:786px;width:320px;height:3px;background:#e0e0e0"></div>
<div class="clip" style="left:1203px;top:792px;width:320px;height:174px">
<table style="width:432px">
<colgroup><col style="width:80px"><col style="width:99px"><col style="width:253px"></colgroup>
<tr><td></td><td class="m">7</td><td>Bond</td></tr>
<tr class="z"><td></td><td class="m">51</td><td></td></tr>
<tr><td></td><td class="m">60</td><td>Ausstehende Einlagen auf das</td></tr>
<tr class="z"><td></td><td class="m">61</td><td></td></tr>
<tr><td></td><td class="m">71</td><td></td></tr>
<tr class="z"><td></td><td class="m">80</td><td>Ausstehende Einlagen auf das</td></tr>
<tr><td></td><td class="m"></td><td></td></tr>
</table>
</div>

<!-- VORLAGEN -->
<div class="a d c" style="left:1527px;top:670px;width:319px;height:28px;line-height:28px;color:#eee">Vorlagen</div>
<div class="clip" style="left:1527px;top:702px;width:319px;height:56px">
<table style="width:319px">
<colgroup><col style="width:80px"><col style="width:165px"><col style="width:74px"></colgroup>
<tr class="h"><td></td><td>Name</td><td style="text-align:left;padding-left:1px">Nächste Buchung</td></tr>
<tr class="f"><td class="k"></td><td style="padding-left:5px">!tmp</td><td></td></tr>
</table>
</div>
<svg class="ic" style="left:1531px;top:713px" width="10" height="6"><use href="#arr"/></svg>
<svg class="ic" style="left:1550px;top:709px" width="14" height="14"><use href="#gear"/></svg>
<svg class="ic" style="left:1571px;top:710px" width="12" height="12"><use href="#lin"/></svg>
<svg class="ic" style="left:1535px;top:738px" width="12" height="12"><use href="#filter"/></svg>
<svg class="ic" style="left:1529px;top:764px" width="56" height="16"><use href="#mk"/></svg>
<div class="t b" style="left:1591px;top:764px">0 Zeilen markiert</div>
<div class="tb" style="left:1694px;top:758px;width:102px;background:#4eace3;color:#1f4a6b">aktualisieren</div>
<svg class="ic" style="left:1700px;top:765px" width="14" height="14"><use href="#ref"/></svg>
<div class="tb g" style="left:1527px;top:790px;width:121px;color:#2f4a1d">Suchfilter leeren</div>
<svg class="ic" style="left:1533px;top:797px" width="14" height="14"><use href="#filterx"/></svg>
<div class="a" style="left:1527px;top:818px;width:319px;height:3px;background:#e0e0e0"></div>
<div class="clip" style="left:1527px;top:824px;width:319px;height:84px">
<table style="width:319px">
<colgroup><col style="width:80px"><col style="width:165px"><col style="width:74px"></colgroup>
<tr><td class="n"><svg width="79" height="28"><use href="#vi"/></svg></td><td>KfZ Benzin</td><td style="border:0"></td></tr>
<tr class="z"><td class="n"><svg width="79" height="28"><use href="#vi"/></svg></td><td>Tanken</td><td style="border:0"></td></tr>
<tr><td class="n"><svg width="79" height="28"><use href="#vi"/></svg></td><td>Wilka</td><td style="border:0">23.01.2022</td></tr>
</table>
</div>
</body></html>
